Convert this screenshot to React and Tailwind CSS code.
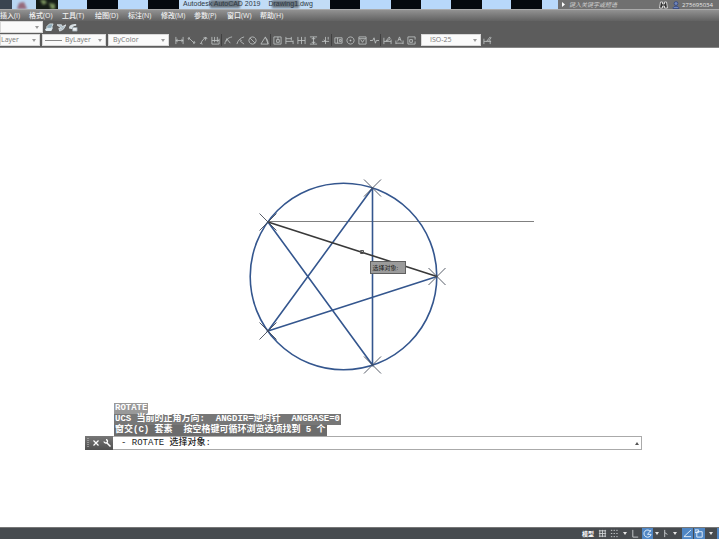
import React from "react";

const ICONS = {
  linear: "M1 1v8M9 1v8M1 5h8M3 3.5L1 5l2 1.5M7 3.5L9 5 7 6.500",
  aligned: "M1 3l2-2M7 9l2-2M2 2l6 6M2 2v2.500M8 8V5.500",
  arc: "M1 8l3 1M7 1l2 2M2.500 8C3 5 5 3 8 2M5 2l3 0-1 3",
  ordinate: "M1 1v8h8M4 1v6M7 1v6M1 5h8M9 3v6",
  radius: "M1 9C1 5 4 2 9 1M3 3l4 5M3 3v3",
  jogged: "M1 9C2 5 5 2 9 1M4 4l2 1-1 1 4 3",
  diameter: "M5 1a4 4 0 1 0 .01 0M2 2l6 6",
  angular: "M1 9h8L6 1 1 9M6 2c2 1 3 4 3 7",
  quick: "M1 1h8v8H1zM4 4h3v3H4zM5.500 1v3",
  baseline: "M1 1v8M1 3h6M1 6h8M7 1v4M9 5v4",
  continue: "M1 1v8M5 1v8M9 1v8M1 5h8",
  space: "M1 1h8M1 9h8M5 1v8M3 3h4M3 7h4",
  break: "M5 1v8M1 6h8M8 1v3M3 4l2 2",
  tolerance: "M1 2h8v6H1zM4 2v6M6 4h2v2H6z",
  center: "M5 1a4 4 0 1 0 .01 0M5 4v2M4 5h2",
  inspect: "M1 1h8v8H1zM3 4l2 3 2-3M1 3h8",
  jogline: "M0 5h3l1.500-3 1.500 6 1-3h3",
  edit: "M1 2v7M1 6h8M3 6l4-5 1 2-4 3M9 4v5",
  textedit: "M1 5v4M9 5v4M1 8h8M3 6l2-5 2 5M4 4h2",
  update: "M1 1h8v3M1 1v8h8V6M3 4h3v3H3z",
  style: "M1 3v6M1 6h8M4 6l4-5 1 1-3 4M8 5v4",
};

function ToolButton({ name }) {
  return (
    <button type="button" aria-label={name} className="flex h-3 w-3 items-center justify-center text-[#c2c6c6]">
      <svg viewBox="0 0 10 10" className="h-[9px] w-[9px]" fill="none" stroke="currentColor" strokeWidth="0.9">
        <path d={ICONS[name]} />
      </svg>
    </button>
  );
}

function Divider() {
  return <span className="h-3 w-px bg-[#414141]" />;
}

function Combo({ label, width, pad, children }) {
  return (
    <div className={"relative h-[12px] shrink-0 border border-[#d8d8d8] bg-[#fafafa] " + width}>
      <select
        aria-label={label}
        className={"block h-full w-full appearance-none bg-transparent text-[7px] leading-[10px] text-[#777] outline-none " + pad}
      >
        <option>{children}</option>
      </select>
      <Caret className="pointer-events-none absolute right-[3px] top-1 text-[#999]" />
    </div>
  );
}

function Caret({ className }) {
  return (
    <svg viewBox="0 0 4 3" className={"h-[3px] w-1 shrink-0 " + className}>
      <path d="M0 0h4L2 3z" fill="currentColor" />
    </svg>
  );
}

const STRIPES = [
  ["w-[12px]", "bg-[#3a4450]"],
  ["w-[24px]", "bg-[#b9d6f2]"],
  ["w-[22px]", "bg-[#151c17]"],
  ["w-[29px]", "bg-[#b8d8fa]"],
  ["w-[31px]", "bg-[#05090e]"],
  ["w-[30px]", "bg-[#b8d8fa]"],
  ["w-[31px]", "bg-[#05090e]"],
  ["w-[151px]", "bg-[#c2dcf6]"],
  ["w-[30px]", "bg-[#05090e]"],
  ["w-[31px]", "bg-[#b8d8fa]"],
  ["w-[30px]", "bg-[#05090e]"],
  ["w-[30px]", "bg-[#b8d8fa]"],
  ["w-[31px]", "bg-[#05090e]"],
  ["w-[29px]", "bg-[#b8d8fa]"],
  ["w-[31px]", "bg-[#05090e]"],
  ["w-[16px]", "bg-[#b8d8fa]"],
];

function TitleBar() {
  return (
    <div className="relative flex h-[9px] overflow-hidden">
      {STRIPES.map(([width, color], i) => (
        <span key={i} className={"h-full shrink-0 " + width + " " + color} />
      ))}
      <svg className="absolute left-0 top-0 h-[9px] w-[360px]" viewBox="0 0 360 9">
        <defs>
          <filter id="soft" x="-20%" y="-40%" width="140%" height="180%">
            <feGaussianBlur stdDeviation="1" />
          </filter>
        </defs>
        <g filter="url(#soft)">
          <path d="M17 9l2-6 5-1 3 7z" fill="#966a7c" />
          <path d="M40 0h5l2 3-4 2zM49 3l6 1v5h-4z" fill="#78905d" />
          <path d="M210 0h30v8h-30zM272 0h27v8h-27z" fill="#6b7680" />
        </g>
      </svg>
      <h1 className="absolute left-[183px] top-0 flex gap-2 whitespace-nowrap font-['Liberation_Sans',sans-serif] text-[7px] leading-[8px] text-[#2e3843]">
        <span>Autodesk AutoCAD 2019</span>
        <span>Drawing1.dwg</span>
      </h1>
      <div className="flex min-w-0 flex-1 items-center bg-[#707070] pl-1 text-[7px] leading-[8px] text-[#d6d6d6]">
        <svg viewBox="0 0 3 5" className="h-[5px] w-[3px] shrink-0">
          <path d="M0 0l3 2.500L0 5z" fill="#fff" />
        </svg>
        <input
          type="text"
          aria-label="搜索"
          placeholder="键入关键字或短语"
          className="ml-1 h-2 min-w-0 flex-1 bg-transparent p-0 text-[6px] italic leading-[8px] outline-none placeholder:text-[#cfcfcf]"
        />
        <button type="button" aria-label="查找" className="mr-1">
          <svg viewBox="0 0 9 8" className="h-2 w-[9px]" fill="#333" stroke="#eee" strokeWidth="0.8">
            <path d="M1.500 1h2v2h2V1h2l1 6h-3V5h-2v2h-3z" />
          </svg>
        </button>
        <button type="button" className="flex items-center gap-[2px] pr-[6px]">
          <svg viewBox="0 0 8 8" className="h-2 w-2" fill="#7287bd" stroke="#30457f" strokeWidth="0.8">
            <circle cx="4" cy="2.500" r="1.900" />
            <path d="M1 7.500c0-3 6-3 6 0z" />
          </svg>
          <span className="text-[6px] text-[#e8e8e8]">275695034</span>
        </button>
      </div>
    </div>
  );
}

const MENUS = ["格式(O)", "工具(T)", "绘图(D)", "标注(N)", "修改(M)", "参数(P)", "窗口(W)", "帮助(H)"];

function Toolbars() {
  return (
    <>
      <nav className="flex h-3 overflow-hidden whitespace-nowrap border-t border-[#aaa] bg-linear-to-b from-[#929292] to-[#626262] text-[7px] font-medium leading-[11px] text-[#f2f2f2]">
        <button type="button" className="w-[29px] shrink-0 text-left">插入(I)</button>
        {MENUS.map((m) => (
          <button key={m} type="button" className="w-[33px] shrink-0 text-left">
            {m}
          </button>
        ))}
      </nav>
      <div className="flex h-3 items-center bg-[#5c5c5c]">
        <Combo label="工作空间" width="w-[43px]" pad="pl-1">{" "}</Combo>
        <div className="flex gap-px pl-px">
          <button type="button" aria-label="图层" className="flex h-3 w-[11px] items-center justify-center">
            <svg viewBox="0 0 10 10" className="h-[9px] w-[9px]">
              <path d="M0 7l3-2h6l-2 4H1z" fill="#dce9ef" />
              <path d="M2 4l3-3h4l-2 5H2z" fill="#8fabba" stroke="#eaf4f7" strokeWidth="0.8" />
            </svg>
          </button>
          <button type="button" aria-label="匹配" className="flex h-3 w-[11px] items-center justify-center">
            <svg viewBox="0 0 10 10" className="h-[9px] w-[9px]" fill="#adbec7" stroke="#e3e9ec" strokeWidth="0.9">
              <path d="M0 2h5l1 2 4-2-3 5-4 2-1-3h3z" />
            </svg>
          </button>
          <button type="button" aria-label="上一个" className="flex h-3 w-[11px] items-center justify-center">
            <svg viewBox="0 0 10 10" className="h-[9px] w-[9px]">
              <path d="M0 6c0-4 3-5 8-5v2C5 3 4 4 4 7z" fill="#d7dfe3" />
              <path d="M4 5h5v4H4z" fill="#edf0f2" stroke="#96a5ad" strokeWidth="0.8" />
            </svg>
          </button>
        </div>
      </div>
      <div className="flex h-[15px] items-center overflow-hidden border-b border-[#858585] bg-[#5c5c5c]">
        <Combo label="颜色" width="w-[40px]" pad="pl-0">Layer</Combo>
        <div className="relative ml-[2px]">
          <Combo label="线型" width="w-[64px]" pad="pl-[22px]">ByLayer</Combo>
          <span className="pointer-events-none absolute left-[3px] top-[6px] h-px w-[17px] bg-[#888]" />
        </div>
        <div className="ml-[2px]">
          <Combo label="打印样式" width="w-[61px]" pad="pl-1">ByColor</Combo>
        </div>
        <div className="ml-1 flex items-center">
          <ToolButton name="linear" />
          <ToolButton name="aligned" />
          <ToolButton name="arc" />
          <ToolButton name="ordinate" />
          <Divider />
          <ToolButton name="radius" />
          <ToolButton name="jogged" />
          <ToolButton name="diameter" />
          <ToolButton name="angular" />
          <Divider />
          <ToolButton name="quick" />
          <ToolButton name="baseline" />
          <ToolButton name="continue" />
          <ToolButton name="space" />
          <ToolButton name="break" />
          <Divider />
          <ToolButton name="tolerance" />
          <ToolButton name="center" />
          <ToolButton name="inspect" />
          <ToolButton name="jogline" />
          <Divider />
          <ToolButton name="edit" />
          <ToolButton name="textedit" />
          <ToolButton name="update" />
        </div>
        <div className="ml-1">
          <Combo label="标注样式" width="w-[60px]" pad="pl-2">ISO-25</Combo>
        </div>
        <ToolButton name="style" />
      </div>
    </>
  );
}

const POINTS = [
  [437, 276.5],
  [372.5, 188],
  [268, 222],
  [268, 331],
  [372.5, 365],
];

function Drawing() {
  return (
    <div className="relative">
      <svg viewBox="0 48 719 355" className="h-[355px] w-full" fill="none">
        <path d="M268 221.500H534" stroke="#808080" />
        <g stroke="#34568e" strokeWidth="1.600">
          <circle cx="343.500" cy="276.500" r="93.300" />
          <path d="M372.500 188V365L268 222M372.500 188L268 331 437 276.500" />
        </g>
        <path d="M268 222L437 276.500" stroke="#393939" strokeWidth="1.600" />
        {POINTS.map(([x, y]) => (
          <path key={x + "-" + y} d={`M${x - 8.5} ${y - 8.5}l17 17M${x + 8.5} ${y - 8.5}l-17 17`} stroke="#444b58" strokeWidth="0.9" />
        ))}
        <path d="M360.500 250.500h3v3h-3z" stroke="#555" />
      </svg>
      <div className="absolute left-1/2 top-[213px] ml-[10px] flex h-[13px] w-[36px] items-center whitespace-nowrap border border-[#606060] bg-[#9b9b9b] pl-[2px] text-[6px] leading-[10px] text-[#222]">
        选择对象:
      </div>
    </div>
  );
}

function CommandLine() {
  return (
    <section className="font-['Liberation_Mono','Noto_Sans_CJK_SC',monospace] text-[9px]">
      <div className="ml-[114px] whitespace-pre font-bold leading-[11px] text-white">
        <p className="w-fit bg-[#999] px-px">ROTATE</p>
        <p className="w-fit bg-[#777] px-px">{"UCS 当前的正角方向:  ANGDIR=逆时针  ANGBASE=0"}</p>
        <p className="w-fit bg-[#6c6c6c] px-px">{"窗交(C) 套素  按空格键可循环浏览选项找到 5 个"}</p>
      </div>
      <div className="ml-[85px] mr-[77px] flex h-[14px] border border-[#aaa] bg-white">
        <div className="-my-px -ml-px flex w-[28px] items-center justify-between bg-linear-to-b from-[#777] to-[#505050] px-[2px] text-white">
          <svg viewBox="0 0 2 10" className="h-[10px] w-[2px]"><path d="M1 0v10" stroke="#ccc" strokeDasharray="1 1" /></svg>
          <button type="button" aria-label="关闭">
            <svg viewBox="0 0 6 6" className="h-[6px] w-[6px]" stroke="#fff" strokeWidth="1.200"><path d="M.5.5l5 5M5.500.5l-5 5" /></svg>
          </button>
          <button type="button" aria-label="自定义">
            <svg viewBox="0 0 8 8" className="h-2 w-2" fill="none" stroke="#fff">
              <path d="M3.500 3.500L7.500 7.500" strokeWidth="1.500" />
              <path d="M1 2.500a1.800 1.800 0 0 0 3 1 1.800 1.800 0 0 0-1-3" strokeWidth="1.300" />
            </svg>
          </button>
        </div>
        <label className="flex min-w-0 flex-1 items-center whitespace-pre pl-2 font-medium leading-[12px] text-[#222]">
          {"- ROTATE 选择对象: "}
          <input type="text" className="min-w-0 flex-1 bg-transparent outline-none" />
        </label>
        <button type="button" aria-label="历史" className="flex items-center pr-[2px]">
          <Caret className="rotate-180 text-[#555]" />
        </button>
      </div>
    </section>
  );
}

function StatusIcon({ label, d, on, dash }) {
  return (
    <button
      type="button"
      aria-label={label}
      className={"flex h-[11px] w-[11px] items-center justify-center " + (on ? "bg-[#4f86c4] text-[#eaf3fc]" : "text-[#ccd0d3]")}
    >
      <svg viewBox="0 0 10 10" className="h-[9px] w-[9px]" fill="none" stroke="currentColor" strokeDasharray={dash}>
        <path d={d} />
      </svg>
    </button>
  );
}

function StatusBar() {
  return (
    <footer className="flex h-[12px] items-center justify-end border-t border-[#777] bg-[#474b4f] text-[#e5e5e5]">
      <button type="button" className="mr-[3px] whitespace-nowrap text-[6px] font-bold leading-[10px] text-white">模型</button>
      <div className="flex items-center gap-px">
        <StatusIcon label="栅格" d="M2 1v8M5 1v8M8 1v8M1 2h8M1 5h8M1 8h8" />
        <StatusIcon label="捕捉" d="M1 1.500h8M1 5h8M1 8.500h8" dash="1.500 1.500" />
        <Caret className="mx-[2px]" />
        <StatusIcon label="正交" d="M2 1v8h6" />
        <StatusIcon label="极轴" d="M8.500 3a4 4 0 1 0 .5 3M5 6l4-5M5 6h4" on />
        <Caret className="mx-px" />
        <StatusIcon label="等轴测" d="M3 1v8M3 4l3 2" />
        <Caret className="mr-1" />
        <StatusIcon label="追踪" d="M9 1L1 8.500h8" on />
        <StatusIcon label="对象捕捉" d="M2 3h6v6H2zM0 1h4v3H0z" on />
        <Caret className="mx-[3px]" />
        <span className="h-[11px] w-[2px] bg-[#4f86c4]" />
      </div>
    </footer>
  );
}

export default function App() {
  return (
    <div className="flex min-h-screen flex-col overflow-hidden bg-white font-['Open_Sans','Noto_Sans_CJK_SC',sans-serif]">
      <header>
        <TitleBar />
        <Toolbars />
      </header>
      <main className="flex-1 bg-white">
        <Drawing />
        <CommandLine />
      </main>
      <StatusBar />
    </div>
  );
}
